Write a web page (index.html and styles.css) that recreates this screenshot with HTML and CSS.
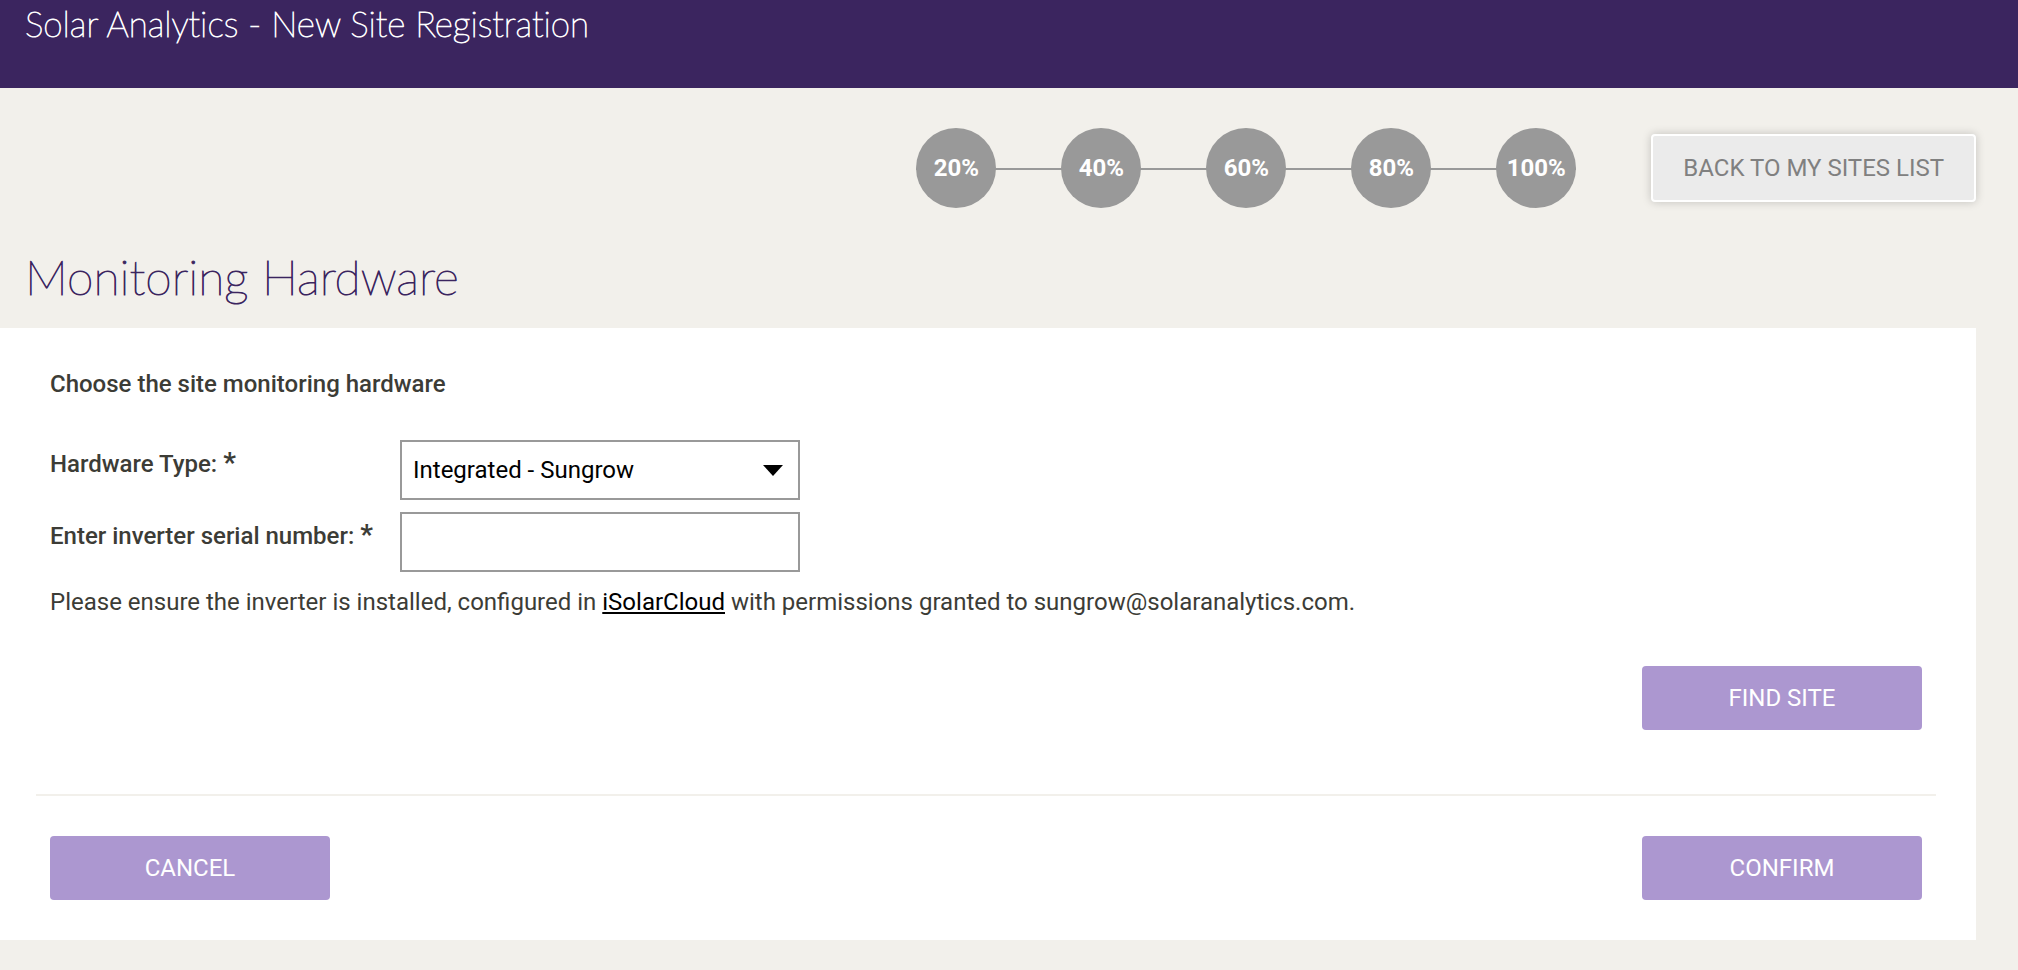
FILE: index.html
```html
<!DOCTYPE html>
<html lang="en">
<head>
<meta charset="utf-8">
<meta name="viewport" content="width=device-width, initial-scale=1">
<title>Solar Analytics - New Site Registration</title>
<link rel="stylesheet" href="styles.css">
</head>
<body>
<header class="banner">
  <h1 class="banner-title">Solar Analytics - New Site Registration</h1>
</header>
<main class="page">
  <div class="toolbar">
    <ol class="steps">
      <li class="step">20%</li>
      <li class="step">40%</li>
      <li class="step">60%</li>
      <li class="step">80%</li>
      <li class="step">100%</li>
    </ol>
    <button class="back" type="button">BACK TO MY SITES LIST</button>
  </div>
  <h2 class="page-title">Monitoring Hardware</h2>
  <form class="panel">
    <h3 class="section-title">Choose the site monitoring hardware</h3>
    <div class="field">
      <label class="label" for="hardware">Hardware Type: <span class="required">*</span></label>
      <div class="select-wrap">
        <select class="control" id="hardware">
          <option>Integrated - Sungrow</option>
        </select>
        <svg class="caret" viewBox="0 0 20 11" aria-hidden="true"><path d="M0 0H20L10 11Z"/></svg>
      </div>
    </div>
    <div class="field">
      <label class="label" for="serial">Enter inverter serial number: <span class="required">*</span></label>
      <input class="control" id="serial" type="text">
    </div>
    <p class="note">Please ensure the inverter is installed, configured in <a class="link" href="#">iSolarCloud</a> with permissions granted to sungrow@solaranalytics.com.</p>
    <div class="find">
      <button class="action" type="button">FIND SITE</button>
    </div>
    <div class="footer">
      <button class="action" type="button">CANCEL</button>
      <button class="action" type="button">CONFIRM</button>
    </div>
  </form>
</main>
</body>
</html>
```
FILE: styles.css
```css
* {
  box-sizing: border-box;
}

body {
  margin: 0;
  background: #f2f0eb;
  color: #3c3c36;
  font-family: Roboto, "Liberation Sans", sans-serif;
  font-size: 24px;
  line-height: 32px;
}

h1, h2, h3, p, ol {
  margin: 0;
  padding: 0;
}

button, input, select {
  font: inherit;
}

.banner {
  padding: 3px 25px 45px;
  background: #3b255f;
  color: #fff;
}

.banner-title {
  font-family: Lato, sans-serif;
  font-size: 35px;
  font-weight: 100;
  font-variant-ligatures: none;
  line-height: 40px;
  -webkit-text-stroke: 1px currentColor;
}

.page {
  padding: 40px 42px 30px 0;
}

.toolbar {
  display: flex;
  align-items: center;
  justify-content: flex-end;
  gap: 75px;
}

.steps {
  display: flex;
  width: 660px;
  justify-content: space-between;
  list-style: none;
  background: linear-gradient(#999, #999) 0 40px / 100% 2px no-repeat;
}

.step {
  width: 80px;
  border-radius: 50%;
  background: #999;
  color: #fff;
  font-weight: 700;
  line-height: 80px;
  text-align: center;
}

.back {
  padding: 16px 30px;
  border: 2px solid #fff;
  border-radius: 4px;
  background: #ebebeb;
  box-shadow: 0 0 10px rgba(0, 0, 0, 0.2);
  color: #808080;
}

.page-title {
  padding: 41px 25px 23px;
  color: #3b255f;
  font-family: Lato, sans-serif;
  font-size: 48px;
  font-weight: 100;
  line-height: 56px;
  -webkit-text-stroke: 1px currentColor;
}

.panel {
  padding: 40px 40px 40px 36px;
  background: #fff;
}

.section-title,
.field,
.note,
.find {
  margin: 0 14px;
}

.section-title {
  margin-bottom: 40px;
  font-size: 24px;
  font-weight: 500;
}

.field {
  display: flex;
  margin-bottom: 12px;
}

.label {
  width: 350px;
  padding-top: 8px;
  font-weight: 500;
}

.required {
  font-size: 28px;
  font-weight: 700;
  line-height: 24px;
}

.select-wrap {
  position: relative;
}

.control {
  display: block;
  width: 400px;
  height: 60px;
  padding: 0 11px;
  border: 2px solid #999;
  border-radius: 0;
  background: #fff;
  color: #000;
  appearance: none;
}

.caret {
  position: absolute;
  top: 25px;
  right: 17px;
  width: 20px;
  height: 11px;
  pointer-events: none;
}

.note {
  padding-top: 2px;
}

.link {
  color: #000;
  text-decoration: underline;
  text-decoration-thickness: 2px;
  text-underline-offset: 2px;
}

.find {
  padding: 48px 0 64px;
  text-align: right;
}

.action {
  width: 280px;
  height: 64px;
  padding: 0;
  border: 0;
  border-radius: 4px;
  background: #ac97d0;
  color: #fff;
  vertical-align: top;
}

.footer {
  display: flex;
  justify-content: space-between;
  padding: 40px 14px 0;
  border-top: 2px solid #f2f0eb;
}
```
